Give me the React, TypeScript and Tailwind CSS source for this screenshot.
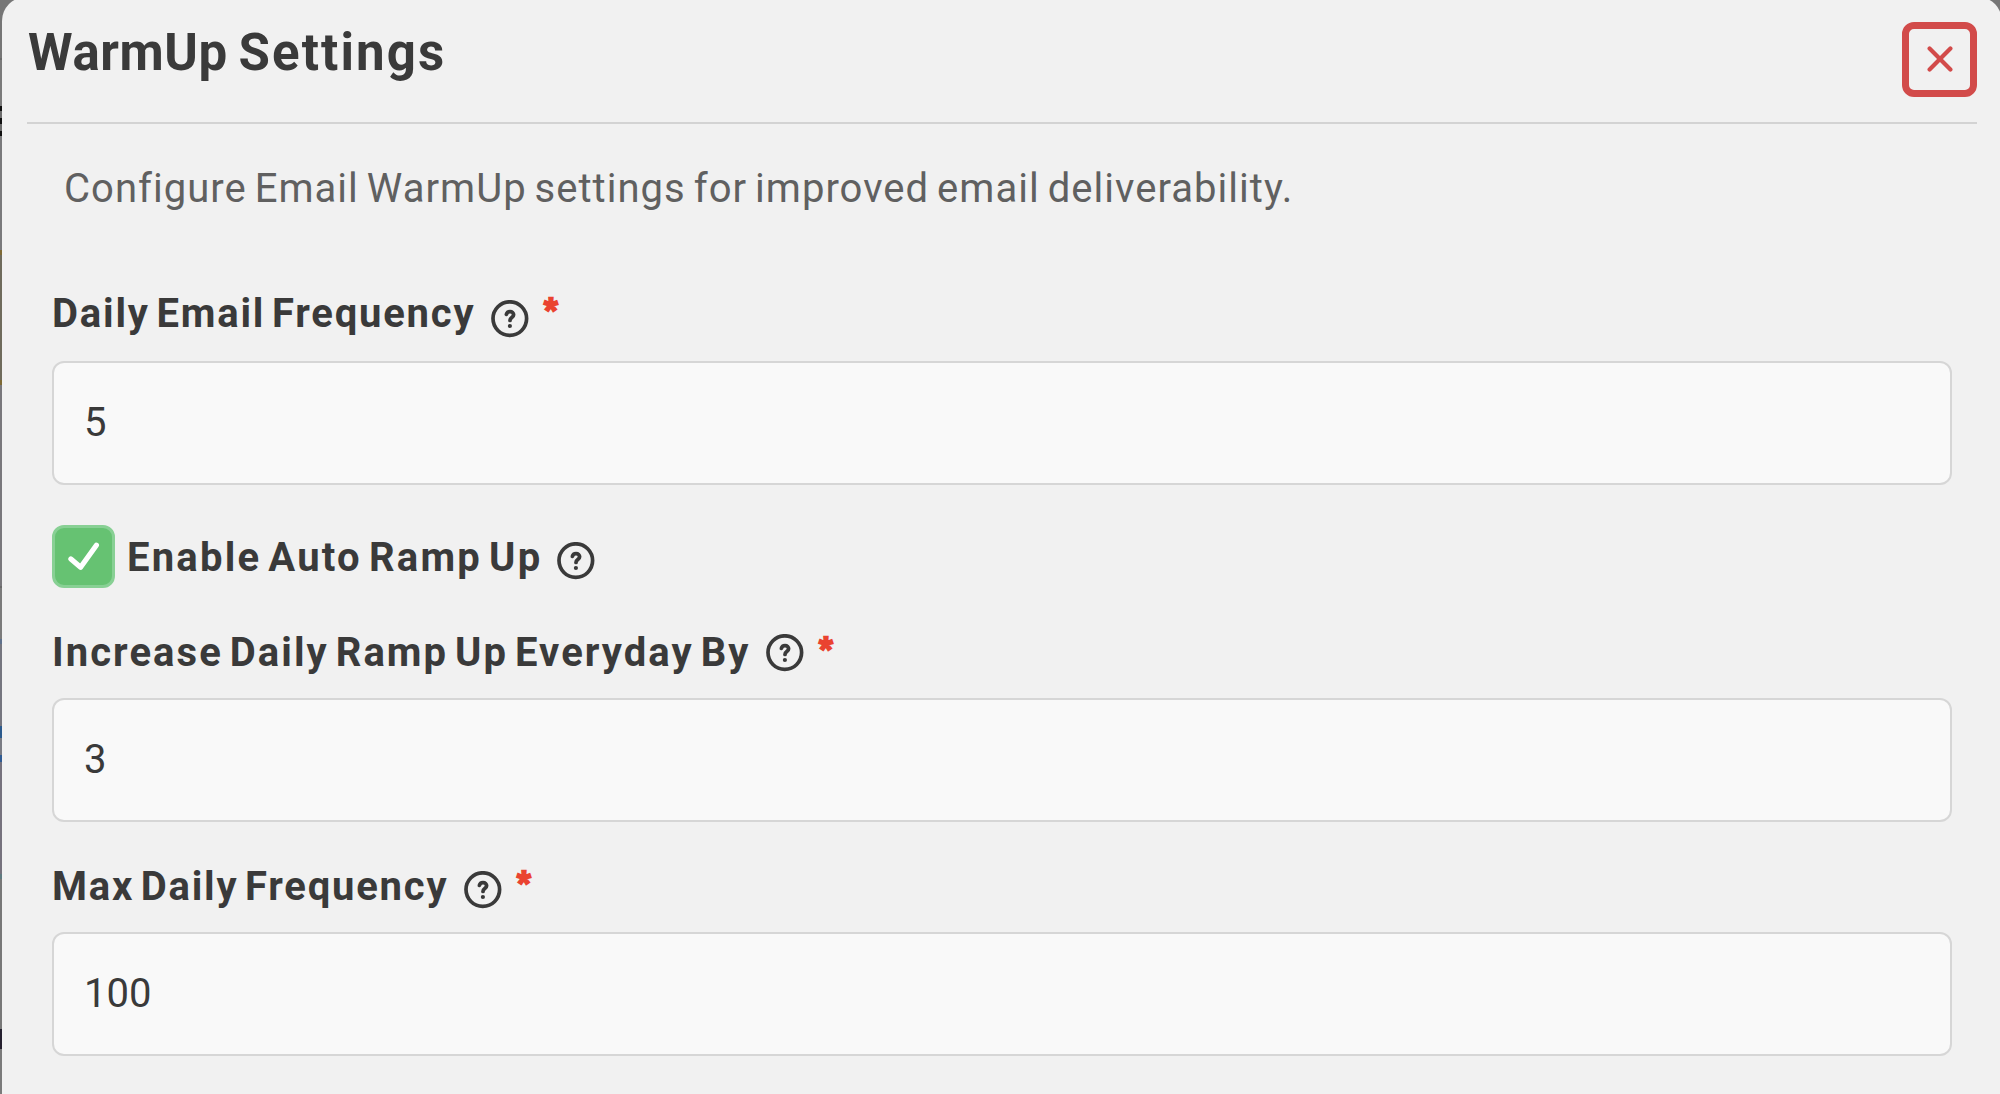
import { useState } from "react";

type FieldProps = {
  label: string;
  value: string;
  labelClass: string;
  rowClass: string;
  iconClass: string;
};

// page behind the modal, only its outer edge is visible
const backdrop = [
  { h: 58, color: "bg-[#767676]" },
  { h: 2, color: "bg-[#6a6a6a]" },
  { h: 46, color: "bg-[#7b7b7b]" },
  { h: 5, color: "bg-[#111111]" },
  { h: 7, color: "bg-[#6c6c6c]" },
  { h: 6, color: "bg-[#111111]" },
  { h: 7, color: "bg-[#6c6c6c]" },
  { h: 5, color: "bg-[#111111]" },
  { h: 114, color: "bg-[#7a7a7c]" },
  { h: 5, color: "bg-[#7e6a35]" },
  { h: 125, color: "bg-[#6f6b5c]" },
  { h: 5, color: "bg-[#7e6a35]" },
  { h: 201, color: "bg-[#79787c]" },
  { h: 2, color: "bg-[#6a6a6a]" },
  { h: 51, color: "bg-[#7b7b7b]" },
  { h: 5, color: "bg-[#5f718c]" },
  { h: 82, color: "bg-[#75767f]" },
  { h: 12, color: "bg-[#2b5a8d]" },
  { h: 17, color: "bg-[#7a7c84]" },
  { h: 7, color: "bg-[#2f5b93]" },
  { h: 112, color: "bg-[#76727d]" },
  { h: 5, color: "bg-[#5f7a80]" },
  { h: 150, color: "bg-[#787878]" },
  { h: 20, color: "bg-[#25202f]" },
  { h: 45, color: "bg-[#7b7b7b]" },
];

const HelpIcon = ({ className }: { className: string }) => (
  <svg
    viewBox="0 0 38 38"
    fill="none"
    stroke="#3a3a3a"
    strokeLinecap="round"
    strokeLinejoin="round"
    className={`w-[38px] h-[38px] shrink-0 ${className}`}
  >
    <circle cx="18.8" cy="18.6" r="16.8" strokeWidth="3.7" />
    <path d="M15.4 14.4C15.9 12.4 17.3 11.6 19 11.6C21.2 11.6 22.6 13 22.6 14.8C22.6 17.6 19 17.6 19 20.4" strokeWidth="3.8" />
    <circle cx="18.9" cy="26" r="2.1" fill="#3a3a3a" stroke="none" />
  </svg>
);

const Field = ({ label, value, labelClass, rowClass, iconClass }: FieldProps) => {
  const [text, setText] = useState(value);

  return (
    <div>
      <div className={`flex items-start ${rowClass}`}>
        <label className={`mt-px text-[40px] leading-10 font-bold whitespace-nowrap ${labelClass}`}>{label}</label>
        <HelpIcon className={iconClass} />
        <span className="-mt-[4px] ml-[15px] text-[29px] leading-10 font-black text-[#ea4330] [-webkit-text-stroke:2.4px_#ea4330]">
          *
        </span>
      </div>
      <input
        value={text}
        onChange={(e) => setText(e.target.value)}
        className="block w-[1900px] h-[124px] rounded-xl border-2 border-[#d6d6d6] bg-[#f9f9f9] pl-[30px] pb-[2px] text-[40px] outline-none"
      />
    </div>
  );
};

const App = () => {
  const [checked, setChecked] = useState(true);

  return (
    <div className="flex w-[2000px] h-[1094px] overflow-hidden bg-[#767676] font-['Roboto',sans-serif] text-[#3a3a3a]">
      <div className="w-[2px] shrink-0">
        {backdrop.map((part, i) => (
          <div key={i} className={part.color} style={{ height: part.h }} />
        ))}
      </div>
      <div className="-mt-[3px] w-[2000px] h-[1110px] shrink-0 rounded-t-3xl bg-[#f1f1f1] px-[25px]">
        <div className="flex justify-between items-start h-[127px] border-b-2 border-[#d3d3d3]">
          <h2 className="mt-[30px] ml-px text-[51px] leading-[52px] font-bold whitespace-nowrap">
            <span className="tracking-[0.6px]">WarmUp</span>{" "}
            <span className="-ml-[2px] tracking-[2.1px]">Settings</span>
          </h2>
          <button className="mt-[25px] flex items-center justify-center w-[75px] h-[75px] rounded-xl border-[7px] border-[#d24b4a]">
            <svg viewBox="0 0 26 26" className="-mt-px w-[26px] h-[26px]" stroke="#d24b4a" strokeWidth="4.2" strokeLinecap="round">
              <path d="M2.6 2.6L23.4 23.4M23.4 2.6L2.6 23.4" />
            </svg>
          </button>
        </div>
        <div className="pl-[25px]">
          <p className="mt-[45px] ml-3 text-[40px] leading-10 whitespace-nowrap tracking-[1.03px] [word-spacing:-3px] text-[#606060]">
            Configure Email WarmUp settings for improved email deliverability.
          </p>
          <Field
            label="Daily Email Frequency"
            value="5"
            labelClass="w-[439px] tracking-[1.8px] [word-spacing:-5px]"
            rowClass="mt-[84px] h-[68px]"
            iconClass="mt-[7px]"
          />
          <div className="mt-10 flex items-start h-[63px]">
            <button
              onClick={() => setChecked(!checked)}
              className="flex items-center justify-center w-[63px] h-[63px] rounded-xl border-[3px] border-[#88d094] bg-[#66c272]"
            >
              {checked && (
                <svg viewBox="0 0 32 30" className="w-8 h-[30px]" fill="none" stroke="white" strokeWidth="5.2" strokeLinecap="round" strokeLinejoin="round">
                  <path d="M2.9 17L12.6 25.2L28.4 3.2" />
                </svg>
              )}
            </button>
            <label className="mt-[13px] ml-3 w-[430px] text-[40px] leading-10 font-bold whitespace-nowrap tracking-[2.2px] [word-spacing:-5px]">
              Enable Auto Ramp Up
            </label>
            <HelpIcon className="mt-[17px]" />
          </div>
          <Field
            label="Increase Daily Ramp Up Everyday By"
            value="3"
            labelClass="w-[714px] tracking-[2.05px] [word-spacing:-5px]"
            rowClass="mt-11 h-[66px]"
            iconClass="mt-[2px]"
          />
          <Field
            label="Max Daily Frequency"
            value="100"
            labelClass="w-[412px] tracking-[1.77px] [word-spacing:-5px]"
            rowClass="mt-11 h-[66px]"
            iconClass="mt-[5px]"
          />
        </div>
      </div>
    </div>
  );
};

export default App;
